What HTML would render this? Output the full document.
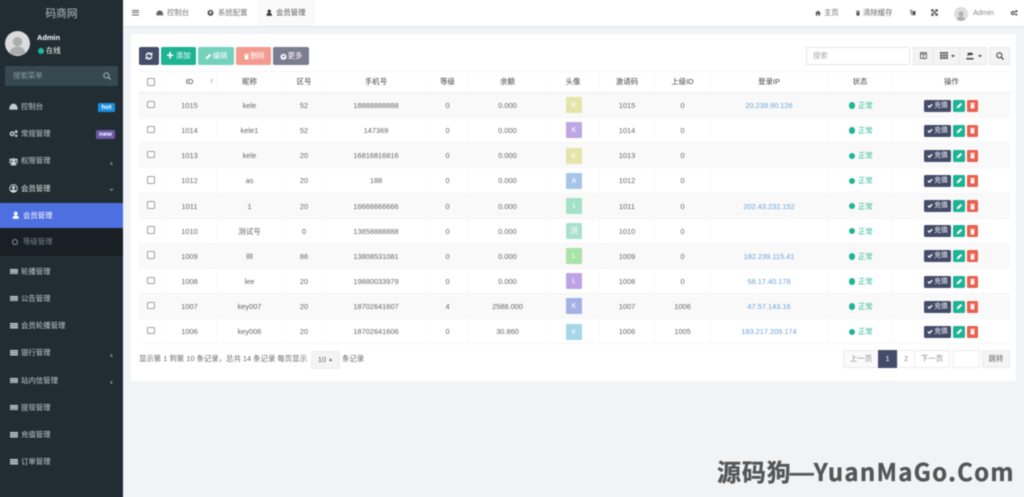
<!DOCTYPE html>
<html lang="zh"><head><meta charset="utf-8"><title>会员管理</title>
<style>
*{box-sizing:border-box}
html,body{margin:0;padding:0;width:1024px;height:497px;overflow:hidden;background:#f1f4f6}
body{font-family:"Liberation Sans","Noto Sans CJK SC",sans-serif;font-size:7.4px;color:#555;position:relative}
#w{position:absolute;left:0;top:0;width:1024px;height:497px;filter:blur(.5px)}
.a{position:absolute;white-space:nowrap}
svg{display:block;position:absolute}
#side{left:-6px;top:-6px;width:129px;height:510px;background:#222d33}
.mi{position:absolute;left:21px;color:#c0ced5;font-size:7.4px;line-height:10px;white-space:nowrap}
.ic{position:absolute;left:9px;width:9px;height:9px;fill:#c0ced5}
.chev{position:absolute;left:109px;width:5px;height:5px;fill:none;stroke:#8a99a1;stroke-width:1}
.bar{position:absolute;left:9.5px;width:8px;height:5.6px;background:repeating-linear-gradient(#c0ced5 0 1.400px,#222d33 1.400px 2.100px)}
#top{left:123px;top:-6px;width:907px;height:32px;background:#fff;box-shadow:0 1px 2px rgba(0,0,0,.08)}
#panel{left:131px;top:34px;width:885px;height:347px;background:#fff;box-shadow:0 0 2px rgba(0,0,0,.04)}
.btn{position:absolute;top:47px;height:18px;border-radius:2px;color:#fff;line-height:18px;text-align:center;font-size:7.4px}
.rt{position:absolute;top:47px;height:18px;background:#f4f4f4;border:1px solid #e9e9e9}
.row,.hd{position:absolute;left:139px;width:871px;display:flex;height:25.15px;line-height:25px;text-align:center;color:#666}
.row.o{background:#f9f9f9}
.hd{top:71px;height:22px;line-height:20.5px;color:#444;border-bottom:1px solid #ececec;border-top:1px solid #f6f6f6}
.row>div,.hd>div{flex:none;position:relative;border-right:1px solid #f8f8f8;height:100%}
.row>div:last-child,.hd>div:last-child{border-right:0}
.row{border-bottom:1px solid #f7f7f7}
.c0{width:24px}.c1{width:54px}.c2{width:66px}.c3{width:43px}.c4{width:101px}.c5{width:42px}.c6{width:78px}.c7{width:53px}.c8{width:55px}.c9{width:56px}.c10{width:117px}.c11{width:65px}.c12{width:117px}
.cb{position:absolute;left:8px;top:7.5px;width:7.600px;height:7.600px;border:1px solid #a0a0a0;border-radius:1.5px;background:#fff}
.hd .cb{top:6px}
.av{position:absolute;left:19px;top:4.3px;width:16px;height:16px;line-height:16px;color:#fff;border-radius:1px;opacity:.95}
.ip{color:#6ba3d6}
.st{color:#2fb795;position:absolute;left:21px;top:0;white-space:nowrap;padding-left:9px}
.st i{position:absolute;left:0;top:9.3px;width:6.400px;height:6.400px;border-radius:50%;background:#1fb595}
.act{position:absolute;top:6.500px;height:12px;border-radius:1.5px;color:#fff;line-height:12px;font-size:6.8px;text-align:center}
.pg{position:absolute;top:350px;height:18px;border:1px solid #ececec;background:#fff;line-height:16px;text-align:center;color:#888}
</style></head><body>
<svg width="0" height="0" style="position:absolute"><defs>
<symbol id="user" viewBox="0 0 10 10"><circle cx="5" cy="3" r="2.5"/><path d="M.8 10c0-3 1.500-4.400 4.200-4.400S9.200 7 9.200 10z"/></symbol>
<symbol id="check" viewBox="0 0 10 10"><path d="M.8 5.200l1.600-1.600L4 5.200 7.800 1.300 9.400 3 4 8.500z"/></symbol>
<symbol id="pen" viewBox="0 0 10 10"><path d="M1 9l.6-2.800L6.600 1.200 8.800 3.400 3.800 8.400z"/></symbol>
<symbol id="trash" viewBox="0 0 10 10"><path d="M1.800 1.300h6.400v1.400H1.800zM2.400 3.300h5.200V9.300H2.400z"/></symbol>
<symbol id="gear" viewBox="0 0 10 10"><path fill-rule="evenodd" d="M5 .5l1 1.400 1.700-.4.300 1.700 1.600.8-.8 1.500.8 1.500-1.600.8-.3 1.700-1.700-.4-1 1.400-1-1.400-1.700.4-.3-1.700-1.600-.8.800-1.500-.8-1.500 1.600-.8.3-1.700 1.700.4zM5 3.400a1.600 1.600 0 100 3.200 1.600 1.600 0 000-3.200z"/></symbol>
<symbol id="dash" viewBox="0 0 10 10"><path d="M.3 8.500C.3 4.500 2.300 1.800 5 1.800s4.700 2.700 4.700 6.700z"/></symbol>
<symbol id="gears" viewBox="0 0 10 10"><path fill-rule="evenodd" d="M3.500 2.500a2.800 2.800 0 110 5.600 2.800 2.800 0 010-5.600zm0 1.600a1.200 1.200 0 100 2.400 1.200 1.200 0 000-2.400z"/><circle cx="8" cy="3" r="1.600"/><circle cx="8" cy="7.500" r="1.400"/></symbol>
<symbol id="group" viewBox="0 0 10 10"><circle cx="5" cy="3.200" r="2"/><circle cx="1.800" cy="3" r="1.400"/><circle cx="8.200" cy="3" r="1.400"/><path d="M2 9.500V6.500c0-1 1-1.500 3-1.500s3 .5 3 1.500v3zM.2 7V5.500c0-.6.500-1 1.300-1V7zM9.800 7V5.500c0-.6-.5-1-1.300-1V7z"/></symbol>
<symbol id="ucircle" viewBox="0 0 10 10"><path fill-rule="evenodd" d="M5 .3a4.700 4.700 0 110 9.400A4.700 4.700 0 015 .3zm0 1.100a3.600 3.600 0 00-2.800 5.900C2.800 6.500 3.800 6.200 5 6.200s2.200.3 2.800 1.100A3.600 3.600 0 005 1.400zm0 .9a1.700 1.700 0 110 3.400 1.700 1.700 0 010-3.400z"/></symbol>
</defs></svg>
<div id="w">

<!-- sidebar -->
<div class="a" id="side"></div>
<div class="a" style="left:0;width:123px;top:6.500px;text-align:center;font-size:10.700px;line-height:14px;color:#b5bfc4">码商网</div>
<div class="a" style="left:5px;top:31px;width:25px;height:25px;border-radius:50%;background:#dcdcdc;overflow:hidden"><svg style="left:3px;top:4px;fill:#adadad" width="19" height="21"><use href="#user"/></svg></div>
<div class="a" style="left:37px;top:33px;font-weight:bold;color:#fff;line-height:10px;font-size:7.4px">Admin</div>
<div class="a" style="left:38px;top:47.500px;width:6px;height:6px;border-radius:50%;background:#18bc9c"></div>
<div class="a" style="left:46px;top:45.500px;color:#fff;line-height:10px">在线</div>
<div class="a" style="left:5px;top:66px;width:113px;height:20px;background:#374850;border-radius:2px"></div>
<div class="a" style="left:13px;top:71px;line-height:10px;color:#8a9aa2">搜索菜单</div>
<svg class="a" style="left:103px;top:72px" width="8" height="8" viewBox="0 0 10 10"><circle cx="4.200" cy="4.200" r="3.200" fill="none" stroke="#a9b7be" stroke-width="1.200"/><path d="M6.600 6.600L9.500 9.500" stroke="#a9b7be" stroke-width="1.400"/></svg>

<svg class="ic" style="top:102px"><use href="#dash"/></svg><div class="mi" style="top:101.500px">控制台</div>
<div class="a" style="left:98px;top:102.500px;width:17px;height:9px;background:#1b8fe0;border-radius:1.500px;color:#fff;font-weight:bold;text-align:center;line-height:9px;font-size:6.500px">hot</div>
<svg class="ic" style="top:129px"><use href="#gears"/></svg><div class="mi" style="top:128.500px">常规管理</div>
<div class="a" style="left:96px;top:130px;width:19px;height:9px;background:#6a5aa8;border-radius:1.500px;color:#fff;font-weight:bold;text-align:center;line-height:9px;font-size:6.500px">new</div>
<svg class="ic" style="top:157px"><use href="#group"/></svg><div class="mi" style="top:156px">权限管理</div>
<svg class="chev" style="top:161px" viewBox="0 0 5 5"><path d="M3.300 1L1.700 2.500 3.300 4"/></svg>
<svg class="ic" style="top:184px;fill:#d5dee2"><use href="#ucircle"/></svg><div class="mi" style="top:183.500px;color:#e2e9ec">会员管理</div>
<svg class="chev" style="top:187px" viewBox="0 0 5 5"><path d="M1 1.800L2.500 3.400 4 1.800"/></svg>

<div class="a" style="left:-6px;top:203px;width:129px;height:25px;background:#4e6fe0"></div>
<svg class="a" style="left:12px;top:211px;fill:#fff" width="7.500" height="8"><use href="#user"/></svg>
<div class="mi" style="top:210.500px;left:23px;color:#fff">会员管理</div>
<div class="a" style="left:-6px;top:228px;width:129px;height:28px;background:#191f24"></div>
<div class="a" style="left:12px;top:239px;width:6px;height:6px;border-radius:50%;border:1px solid #8a99a1"></div>
<div class="mi" style="top:237px;left:23px;color:#75848c">等级管理</div>

<div class="bar" style="top:268.500px"></div><div class="mi" style="top:266.500px">轮播管理</div>
<div class="bar" style="top:295.500px"></div><div class="mi" style="top:293.500px">公告管理</div>
<div class="bar" style="top:323px"></div><div class="mi" style="top:321px">会员轮播管理</div>
<div class="bar" style="top:350px"></div><div class="mi" style="top:348px">银行管理</div>
<svg class="chev" style="top:353px" viewBox="0 0 5 5"><path d="M3.300 1L1.700 2.500 3.300 4"/></svg>
<div class="bar" style="top:377.500px"></div><div class="mi" style="top:375.500px">站内信管理</div>
<svg class="chev" style="top:380px" viewBox="0 0 5 5"><path d="M3.300 1L1.700 2.500 3.300 4"/></svg>
<div class="bar" style="top:404.500px"></div><div class="mi" style="top:402.500px">提现管理</div>
<div class="bar" style="top:432px"></div><div class="mi" style="top:430px">充值管理</div>
<div class="bar" style="top:459px"></div><div class="mi" style="top:457px">订单管理</div>

<!-- top bar -->
<div class="a" id="top"></div>
<div class="a" style="left:258px;top:-6px;width:57px;height:32px;background:#fafafa"></div>
<div class="a" style="left:132px;top:10px;width:6.500px;height:5.500px;background:repeating-linear-gradient(#666 0 1px,#fff 1px 2.200px)"></div>
<svg class="a" style="left:156px;top:9px;fill:#666" width="7.500" height="7.500"><use href="#dash"/></svg>
<div class="a" style="left:167px;top:8px;line-height:10px;color:#777">控制台</div>
<svg class="a" style="left:207px;top:9px;fill:#555" width="7" height="7"><use href="#gear"/></svg>
<div class="a" style="left:218px;top:8px;line-height:10px;color:#777">系统配置</div>
<svg class="a" style="left:266px;top:9px;fill:#333" width="6.500" height="7"><use href="#user"/></svg>
<div class="a" style="left:276px;top:8px;line-height:10px;color:#555">会员管理</div>
<svg class="a" style="left:815px;top:9.500px;fill:#555" width="6" height="6" viewBox="0 0 10 10"><path d="M5 .8L10 5.400H8.500V9.500H6V6.500H4V9.500H1.500V5.400H0z"/></svg>
<div class="a" style="left:824px;top:8px;line-height:10px;color:#666">主页</div>
<svg class="a" style="left:855px;top:9.500px;fill:#555" width="6" height="6"><use href="#trash"/></svg>
<div class="a" style="left:863px;top:8px;line-height:10px;color:#666">清除缓存</div>
<svg class="a" style="left:909px;top:9px" width="7" height="7" viewBox="0 0 10 10"><path d="M1 1h4l1 8H3z" fill="#999"/><path d="M5.500 3H9.500L9 9H6z" fill="#444"/></svg>
<svg class="a" style="left:931px;top:9px" width="7" height="7" viewBox="0 0 10 10" fill="none" stroke="#444" stroke-width="1.400"><path d="M1 1l8 8M9 1L1 9"/><path d="M1 4V1h3M6 1h3v3M9 6v3H6M4 9H1V6"/></svg>
<div class="a" style="left:954px;top:7px;width:14px;height:14px;border-radius:50%;background:#dedede;overflow:hidden"><svg style="left:2px;top:2.500px;fill:#b0b0b0" width="10" height="12"><use href="#user"/></svg></div>
<div class="a" style="left:973px;top:8px;line-height:10px;color:#888">Admin</div>
<svg class="a" style="left:1010px;top:9px;fill:#555" width="8" height="7.500"><use href="#gears"/></svg>

<!-- panel -->
<div class="a" id="panel"></div>

<div class="btn" style="left:139px;width:20px;background:#444c69"><svg style="left:6px;top:5px" width="8" height="8" viewBox="0 0 10 10" fill="none" stroke="#fff" stroke-width="1.800"><path d="M1.500 4.500A3.600 3.600 0 018 3M8.500 5.500A3.600 3.600 0 012 7"/><path d="M8.800 .8v3H5.800M1.200 9.200v-3h3" stroke-width="1"/></svg></div>
<div class="btn" style="left:161px;width:35px;background:#1db394"><span style="font-weight:bold">✚</span> 添加</div>
<div class="btn" style="left:198px;width:36px;background:#74d1bc"><svg style="left:6.500px;top:5.500px;fill:#fff" width="7" height="7"><use href="#pen"/></svg><span style="padding-left:8px">编辑</span></div>
<div class="btn" style="left:236px;width:35px;background:#f49a8f"><svg style="left:7px;top:5.500px;fill:#fff" width="7" height="7"><use href="#trash"/></svg><span style="padding-left:8px">删除</span></div>
<div class="btn" style="left:273px;width:36px;background:#7b7d90"><svg style="left:6.500px;top:5.500px;fill:#fff" width="7" height="7"><use href="#gear"/></svg><span style="padding-left:8px">更多</span></div>

<div class="a" style="left:806px;top:47px;width:104px;height:18px;border:1px solid #e6e6e6;background:#fff;border-radius:1px;line-height:16px;padding-left:6px;color:#aaa">搜索</div>
<div class="rt" style="left:913px;width:21px"><svg style="left:6px;top:4px" width="7" height="7" viewBox="0 0 10 10" fill="none" stroke="#555" stroke-width="1.200"><rect x=".8" y=".8" width="8.400" height="8.400"/><path d="M.8 3h8.400M5 3v6.200"/></svg></div>
<div class="rt" style="left:933px;width:27px"><svg style="left:6px;top:4px;fill:#555" width="8" height="7" viewBox="0 0 10 9"><path d="M0 0h2.800v2.500H0zM3.600 0h2.800v2.500H3.600zM7.200 0H10v2.500H7.200zM0 3.300h2.800v2.500H0zM3.600 3.300h2.800v2.500H3.600zM7.200 3.300H10v2.500H7.200zM0 6.500h2.800V9H0zM3.600 6.500h2.800V9H3.600zM7.200 6.500H10V9H7.200z"/></svg><svg style="left:17px;top:7px;fill:#555" width="4" height="2.500" viewBox="0 0 4 2.500"><path d="M0 0h4L2 2.500z"/></svg></div>
<div class="rt" style="left:959px;width:28px"><svg style="left:6px;top:3.500px;fill:#444" width="8" height="8" viewBox="0 0 10 10"><path d="M2 1h3.500V.2L9.500 2.500 5.500 4.700V3.800H3.500L2 6zM.5 7.500h9v1.800h-9z"/></svg><svg style="left:18px;top:7px;fill:#555" width="4" height="2.500" viewBox="0 0 4 2.500"><path d="M0 0h4L2 2.500z"/></svg></div>
<div class="rt" style="left:989px;width:21px;border-radius:1px"><svg style="left:6px;top:4px" width="8" height="8" viewBox="0 0 10 10"><circle cx="4.200" cy="4.200" r="3.200" fill="none" stroke="#444" stroke-width="1.300"/><path d="M6.600 6.600L9.500 9.500" stroke="#444" stroke-width="1.500"/></svg></div>

<!-- header -->
<div class="hd"><div class="c0"><span class="cb"></span></div><div class="c1"><b style="font-weight:normal;color:#333">ID</b><span class="a" style="left:46px;top:0;color:#ccc;font-size:6px">⬍</span></div><div class="c2">昵称</div><div class="c3">区号</div><div class="c4">手机号</div><div class="c5">等级</div><div class="c6">余额</div><div class="c7">头像</div><div class="c8">激请码</div><div class="c9">上级ID</div><div class="c10">登录IP</div><div class="c11">状态</div><div class="c12">操作</div></div>

<div class="row o" style="top:93px"><div class="c0"><span class="cb"></span></div><div class="c1">1015</div><div class="c2">kele</div><div class="c3">52</div><div class="c4">18888888888</div><div class="c5">0</div><div class="c6">0.000</div><div class="c7"><span class="av" style="background:#e3e5a5">K</span></div><div class="c8">1015</div><div class="c9">0</div><div class="c10 ip">20.239.90.126</div><div class="c11"><span class="st"><i></i>正常</span></div><div class="c12"><span class="act" style="left:31px;width:27px;background:#444c69"><svg style="left:3px;top:3px;fill:#fff" width="6" height="6"><use href="#check"/></svg><span style="padding-left:7px">充值</span></span><span class="act" style="left:60px;width:12px;background:#1db394"><svg style="left:2.500px;top:2.500px;fill:#fff" width="7" height="7"><use href="#pen"/></svg></span><span class="act" style="left:74px;width:11px;background:#e8604f"><svg style="left:2px;top:2.500px;fill:#fff" width="7" height="7"><use href="#trash"/></svg></span></div></div>

<div class="row" style="top:118.150px"><div class="c0"><span class="cb"></span></div><div class="c1">1014</div><div class="c2">kele1</div><div class="c3">52</div><div class="c4">147369</div><div class="c5">0</div><div class="c6">0.000</div><div class="c7"><span class="av" style="background:#b9a3e3">K</span></div><div class="c8">1014</div><div class="c9">0</div><div class="c10 ip"></div><div class="c11"><span class="st"><i></i>正常</span></div><div class="c12"><span class="act" style="left:31px;width:27px;background:#444c69"><svg style="left:3px;top:3px;fill:#fff" width="6" height="6"><use href="#check"/></svg><span style="padding-left:7px">充值</span></span><span class="act" style="left:60px;width:12px;background:#1db394"><svg style="left:2.500px;top:2.500px;fill:#fff" width="7" height="7"><use href="#pen"/></svg></span><span class="act" style="left:74px;width:11px;background:#e8604f"><svg style="left:2px;top:2.500px;fill:#fff" width="7" height="7"><use href="#trash"/></svg></span></div></div>

<div class="row o" style="top:143.300px"><div class="c0"><span class="cb"></span></div><div class="c1">1013</div><div class="c2">kele</div><div class="c3">20</div><div class="c4">16816816816</div><div class="c5">0</div><div class="c6">0.000</div><div class="c7"><span class="av" style="background:#e3e5a5">K</span></div><div class="c8">1013</div><div class="c9">0</div><div class="c10 ip"></div><div class="c11"><span class="st"><i></i>正常</span></div><div class="c12"><span class="act" style="left:31px;width:27px;background:#444c69"><svg style="left:3px;top:3px;fill:#fff" width="6" height="6"><use href="#check"/></svg><span style="padding-left:7px">充值</span></span><span class="act" style="left:60px;width:12px;background:#1db394"><svg style="left:2.500px;top:2.500px;fill:#fff" width="7" height="7"><use href="#pen"/></svg></span><span class="act" style="left:74px;width:11px;background:#e8604f"><svg style="left:2px;top:2.500px;fill:#fff" width="7" height="7"><use href="#trash"/></svg></span></div></div>

<div class="row" style="top:168.450px"><div class="c0"><span class="cb"></span></div><div class="c1">1012</div><div class="c2">as</div><div class="c3">20</div><div class="c4">188</div><div class="c5">0</div><div class="c6">0.000</div><div class="c7"><span class="av" style="background:#a3c4e6">A</span></div><div class="c8">1012</div><div class="c9">0</div><div class="c10 ip"></div><div class="c11"><span class="st"><i></i>正常</span></div><div class="c12"><span class="act" style="left:31px;width:27px;background:#444c69"><svg style="left:3px;top:3px;fill:#fff" width="6" height="6"><use href="#check"/></svg><span style="padding-left:7px">充值</span></span><span class="act" style="left:60px;width:12px;background:#1db394"><svg style="left:2.500px;top:2.500px;fill:#fff" width="7" height="7"><use href="#pen"/></svg></span><span class="act" style="left:74px;width:11px;background:#e8604f"><svg style="left:2px;top:2.500px;fill:#fff" width="7" height="7"><use href="#trash"/></svg></span></div></div>

<div class="row o" style="top:193.600px"><div class="c0"><span class="cb"></span></div><div class="c1">1011</div><div class="c2">1</div><div class="c3">20</div><div class="c4">16666666666</div><div class="c5">0</div><div class="c6">0.000</div><div class="c7"><span class="av" style="background:#9fe0c6">1</span></div><div class="c8">1011</div><div class="c9">0</div><div class="c10 ip">202.43.232.152</div><div class="c11"><span class="st"><i></i>正常</span></div><div class="c12"><span class="act" style="left:31px;width:27px;background:#444c69"><svg style="left:3px;top:3px;fill:#fff" width="6" height="6"><use href="#check"/></svg><span style="padding-left:7px">充值</span></span><span class="act" style="left:60px;width:12px;background:#1db394"><svg style="left:2.500px;top:2.500px;fill:#fff" width="7" height="7"><use href="#pen"/></svg></span><span class="act" style="left:74px;width:11px;background:#e8604f"><svg style="left:2px;top:2.500px;fill:#fff" width="7" height="7"><use href="#trash"/></svg></span></div></div>

<div class="row" style="top:218.750px"><div class="c0"><span class="cb"></span></div><div class="c1">1010</div><div class="c2">测试号</div><div class="c3">0</div><div class="c4">13858888888</div><div class="c5">0</div><div class="c6">0.000</div><div class="c7"><span class="av" style="background:#a5e0cc">测</span></div><div class="c8">1010</div><div class="c9">0</div><div class="c10 ip"></div><div class="c11"><span class="st"><i></i>正常</span></div><div class="c12"><span class="act" style="left:31px;width:27px;background:#444c69"><svg style="left:3px;top:3px;fill:#fff" width="6" height="6"><use href="#check"/></svg><span style="padding-left:7px">充值</span></span><span class="act" style="left:60px;width:12px;background:#1db394"><svg style="left:2.500px;top:2.500px;fill:#fff" width="7" height="7"><use href="#pen"/></svg></span><span class="act" style="left:74px;width:11px;background:#e8604f"><svg style="left:2px;top:2.500px;fill:#fff" width="7" height="7"><use href="#trash"/></svg></span></div></div>

<div class="row o" style="top:243.900px"><div class="c0"><span class="cb"></span></div><div class="c1">1009</div><div class="c2">llll</div><div class="c3">86</div><div class="c4">13808531081</div><div class="c5">0</div><div class="c6">0.000</div><div class="c7"><span class="av" style="background:#a4e3a4">L</span></div><div class="c8">1009</div><div class="c9">0</div><div class="c10 ip">182.239.115.41</div><div class="c11"><span class="st"><i></i>正常</span></div><div class="c12"><span class="act" style="left:31px;width:27px;background:#444c69"><svg style="left:3px;top:3px;fill:#fff" width="6" height="6"><use href="#check"/></svg><span style="padding-left:7px">充值</span></span><span class="act" style="left:60px;width:12px;background:#1db394"><svg style="left:2.500px;top:2.500px;fill:#fff" width="7" height="7"><use href="#pen"/></svg></span><span class="act" style="left:74px;width:11px;background:#e8604f"><svg style="left:2px;top:2.500px;fill:#fff" width="7" height="7"><use href="#trash"/></svg></span></div></div>

<div class="row" style="top:269.050px"><div class="c0"><span class="cb"></span></div><div class="c1">1008</div><div class="c2">lee</div><div class="c3">20</div><div class="c4">19880033979</div><div class="c5">0</div><div class="c6">0.000</div><div class="c7"><span class="av" style="background:#bb9fe3">L</span></div><div class="c8">1008</div><div class="c9">0</div><div class="c10 ip">58.17.40.178</div><div class="c11"><span class="st"><i></i>正常</span></div><div class="c12"><span class="act" style="left:31px;width:27px;background:#444c69"><svg style="left:3px;top:3px;fill:#fff" width="6" height="6"><use href="#check"/></svg><span style="padding-left:7px">充值</span></span><span class="act" style="left:60px;width:12px;background:#1db394"><svg style="left:2.500px;top:2.500px;fill:#fff" width="7" height="7"><use href="#pen"/></svg></span><span class="act" style="left:74px;width:11px;background:#e8604f"><svg style="left:2px;top:2.500px;fill:#fff" width="7" height="7"><use href="#trash"/></svg></span></div></div>

<div class="row o" style="top:294.200px"><div class="c0"><span class="cb"></span></div><div class="c1">1007</div><div class="c2">key007</div><div class="c3">20</div><div class="c4">18702641607</div><div class="c5">4</div><div class="c6">2588.000</div><div class="c7"><span class="av" style="background:#a0aee3">K</span></div><div class="c8">1007</div><div class="c9">1006</div><div class="c10 ip">47.57.143.16</div><div class="c11"><span class="st"><i></i>正常</span></div><div class="c12"><span class="act" style="left:31px;width:27px;background:#444c69"><svg style="left:3px;top:3px;fill:#fff" width="6" height="6"><use href="#check"/></svg><span style="padding-left:7px">充值</span></span><span class="act" style="left:60px;width:12px;background:#1db394"><svg style="left:2.500px;top:2.500px;fill:#fff" width="7" height="7"><use href="#pen"/></svg></span><span class="act" style="left:74px;width:11px;background:#e8604f"><svg style="left:2px;top:2.500px;fill:#fff" width="7" height="7"><use href="#trash"/></svg></span></div></div>

<div class="row" style="top:319.350px"><div class="c0"><span class="cb"></span></div><div class="c1">1006</div><div class="c2">key006</div><div class="c3">20</div><div class="c4">18702641606</div><div class="c5">0</div><div class="c6">30.860</div><div class="c7"><span class="av" style="background:#a0d5e6">K</span></div><div class="c8">1006</div><div class="c9">1005</div><div class="c10 ip">183.217.209.174</div><div class="c11"><span class="st"><i></i>正常</span></div><div class="c12"><span class="act" style="left:31px;width:27px;background:#444c69"><svg style="left:3px;top:3px;fill:#fff" width="6" height="6"><use href="#check"/></svg><span style="padding-left:7px">充值</span></span><span class="act" style="left:60px;width:12px;background:#1db394"><svg style="left:2.500px;top:2.500px;fill:#fff" width="7" height="7"><use href="#pen"/></svg></span><span class="act" style="left:74px;width:11px;background:#e8604f"><svg style="left:2px;top:2.500px;fill:#fff" width="7" height="7"><use href="#trash"/></svg></span></div></div>

<!-- footer -->
<div class="a" style="left:139px;top:354px;line-height:10px;color:#666">显示第 1 到第 10 条记录，总共 14 条记录 每页显示</div>
<div class="a" style="left:311px;top:351px;width:29px;height:18px;background:#f4f4f4;border:1px solid #eee;border-radius:1px;line-height:16px;text-align:center;color:#666">10 <span style="font-size:5px;vertical-align:1px">▲</span></div>
<div class="a" style="left:342px;top:354px;line-height:10px;color:#666">条记录</div>
<div class="pg" style="left:843px;width:36px;background:#fafafa;border-radius:1px 0 0 1px">上一页</div>
<div class="pg" style="left:878px;width:19px;background:#444c69;border-color:#444c69;color:#fff">1</div>
<div class="pg" style="left:897px;width:18px">2</div>
<div class="pg" style="left:914px;width:36px">下一页</div>
<div class="pg" style="left:953px;width:27px"></div>
<div class="pg" style="left:982px;width:28px;background:#f4f4f4;color:#666">跳转</div>

<!-- watermark -->
<div class="a" style="left:717px;top:454px;font-family:'Noto Sans CJK SC','Liberation Sans',sans-serif;font-weight:bold;font-size:24px;line-height:34px;color:#555;letter-spacing:.9px;-webkit-text-stroke:.35px #555">源码狗<span style="font-family:'Liberation Sans',sans-serif;letter-spacing:0;margin-left:-2px">—</span><span style="letter-spacing:1.250px">YuanMaGo.Com</span></div>
</div>
</body></html>
